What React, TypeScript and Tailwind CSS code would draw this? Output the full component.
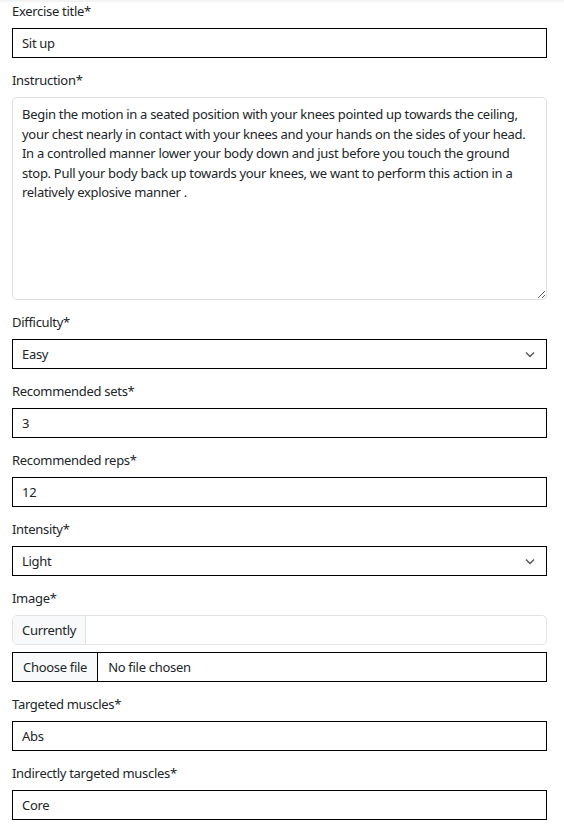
import { type ReactNode } from "react";

const font = { fontFamily: '"Noto Sans", "Open Sans", sans-serif' };

const instruction = [
  "Begin the motion in a seated position with your knees pointed up towards the ceiling,",
  "your chest nearly in contact with your knees and your hands on the sides of your head.",
  "In a controlled manner lower your body down and just before you touch the ground",
  "stop. Pull your body back up towards your knees, we want to perform this action in a",
  "relatively explosive manner .",
].join("\n");

function Field({ label, children, last = false }: { label: string; children: ReactNode; last?: boolean }) {
  return (
    <div className={last ? "" : "mb-[11px]"}>
      <label className="mb-2 block h-5 pt-[3px] text-[13px] leading-[17px] text-[#212529]">{label}</label>
      {children}
    </div>
  );
}

function TextInput({ value }: { value: string }) {
  return (
    <div className="flex h-[30px] w-[535px] items-center border border-black bg-white px-[9px] pt-[2px] text-[13px] text-[#212529]">
      {value}
    </div>
  );
}

function Select({ value }: { value: string }) {
  return (
    <div className="flex h-[30px] w-[535px] items-center justify-between border border-black bg-white pl-[9px] pr-[11px] text-[13px] text-[#212529]">
      <span className="pt-[2px]">{value}</span>
      <svg width="10" height="7" viewBox="0 0 10 7" fill="none">
        <path d="M1 1.5 5 5.5 9 1.5" stroke="#555" strokeWidth="1.4" />
      </svg>
    </div>
  );
}

export default function App() {
  return (
    <div className="relative min-h-[830px] bg-white px-3 text-[13px] tracking-[-0.3px] text-[#212529]" style={font}>
      <div className="absolute left-0 right-0 top-0 h-[2px] bg-[#f3f3f3]" />
      <Field label="Exercise title*">
        <TextInput value="Sit up" />
      </Field>
      <Field label="Instruction*">
        <textarea
          readOnly
          wrap="off"
          value={instruction}
          className="block h-[203px] w-[535px] resize-y overflow-hidden rounded-[5px] border border-[#dedede] bg-white px-[9px] pt-[7px] text-[13px] leading-[19.5px] tracking-[-0.3px] text-[#212529] outline-none"
          style={font}
        />
      </Field>
      <Field label="Difficulty*">
        <Select value="Easy" />
      </Field>
      <Field label="Recommended sets*">
        <TextInput value="3" />
      </Field>
      <Field label="Recommended reps*">
        <TextInput value="12" />
      </Field>
      <Field label="Intensity*">
        <Select value="Light" />
      </Field>
      <Field label="Image*">
        <div className="mb-[7px] flex h-[30px] w-[535px] overflow-hidden rounded-[5px] border border-[#e3e3e3] bg-white">
          <span className="flex items-center border-r border-[#e3e3e3] bg-[#f8f9fa] px-[9px] pt-[2px]">Currently</span>
          <span className="flex-1" />
        </div>
        <div className="flex h-[30px] w-[535px] border border-black bg-white">
          <span className="flex items-center border-r border-black bg-[#f8f9fa] px-[10px] pt-[2px]">Choose file</span>
          <span className="flex items-center px-[10px] pt-[2px]">No file chosen</span>
        </div>
      </Field>
      <Field label="Targeted muscles*">
        <TextInput value="Abs" />
      </Field>
      <Field label="Indirectly targeted muscles*" last>
        <TextInput value="Core" />
      </Field>
    </div>
  );
}
